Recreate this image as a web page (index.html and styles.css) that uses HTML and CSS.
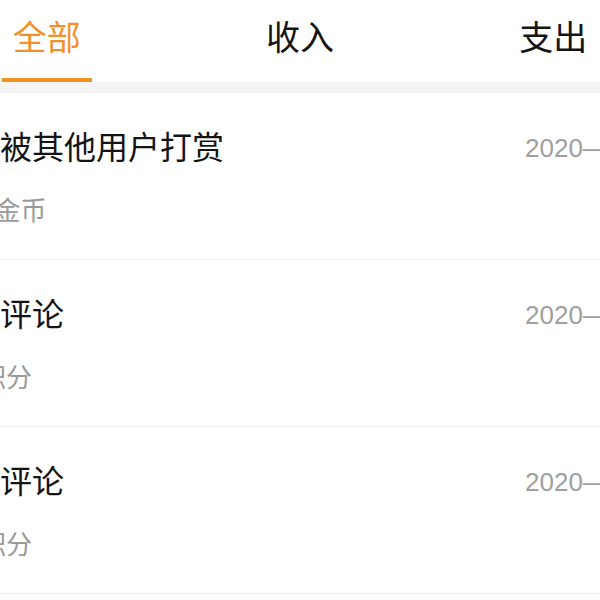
FILE: index.html
```html
<!DOCTYPE html>
<html lang="zh-CN">
<head>
<meta charset="utf-8">
<title>明细</title>
<link rel="stylesheet" href="styles.css">
</head>
<body>
<div class="screen">
  <nav class="tabs">
    <div class="tab active"><span class="tab-label">全部</span><span class="tab-indicator"></span></div>
    <div class="tab"><span class="tab-label">收入</span><span class="tab-indicator"></span></div>
    <div class="tab"><span class="tab-label">支出</span><span class="tab-indicator"></span></div>
  </nav>
  <div class="divider-band"></div>
  <ul class="records">
    <li class="record">
      <div class="record-main">
        <div class="record-title">作品被其他用户打赏</div>
        <div class="record-amount">+100金币</div>
      </div>
      <div class="record-date">2020—05—20 12:30</div>
    </li>
    <li class="record">
      <div class="record-main">
        <div class="record-title">发表评论</div>
        <div class="record-amount">+10积分</div>
      </div>
      <div class="record-date">2020—05—19 18:42</div>
    </li>
    <li class="record">
      <div class="record-main">
        <div class="record-title">发表评论</div>
        <div class="record-amount">+10积分</div>
      </div>
      <div class="record-date">2020—05—19 09:15</div>
    </li>
    <li class="record">
      <div class="record-main">
        <div class="record-title">发表评论</div>
        <div class="record-amount">+10积分</div>
      </div>
      <div class="record-date">2020—05—18 21:07</div>
    </li>
  </ul>
</div>
</body>
</html>
```
FILE: styles.css
```css
html, body {
  margin: 0;
  padding: 0;
  background: #ffffff;
  overflow: hidden;
}

body {
  font-family: "Liberation Sans", "Noto Sans CJK SC", sans-serif;
  color: #141414;
}

.screen {
  width: 760px;
  margin-left: -80px;
}

.tabs {
  display: flex;
  height: 82px;
}

.tab {
  flex: 1;
  display: flex;
  flex-direction: column;
  align-items: center;
}

.tab-label {
  font-size: 34px;
  line-height: 44px;
  padding-top: 16px;
  color: #141414;
}

.tab-indicator {
  margin-top: auto;
  width: 90px;
  height: 4px;
  background: transparent;
}

.tab.active .tab-label {
  color: #f0922b;
}

.tab.active .tab-indicator {
  background: #f0901f;
}

.divider-band {
  height: 11px;
  background: #f4f4f4;
}

.records {
  list-style: none;
  margin: 0;
  padding: 0;
}

.record {
  display: flex;
  justify-content: space-between;
  align-items: flex-start;
  padding: 33px 0 30px 16px;
  border-bottom: 1px solid #eeeeee;
}

.record-main {
  display: flex;
  flex-direction: column;
  gap: 23px;
}

.record-title {
  font-size: 32px;
  line-height: 44px;
  color: #141414;
  white-space: nowrap;
}

.record-amount {
  font-size: 26px;
  line-height: 36px;
  color: #9a9a9a;
  white-space: nowrap;
}

.record-date {
  flex: none;
  width: 155px;
  overflow: hidden;
  font-size: 26px;
  line-height: 44px;
  color: #9f9f9f;
  white-space: nowrap;
}
```
